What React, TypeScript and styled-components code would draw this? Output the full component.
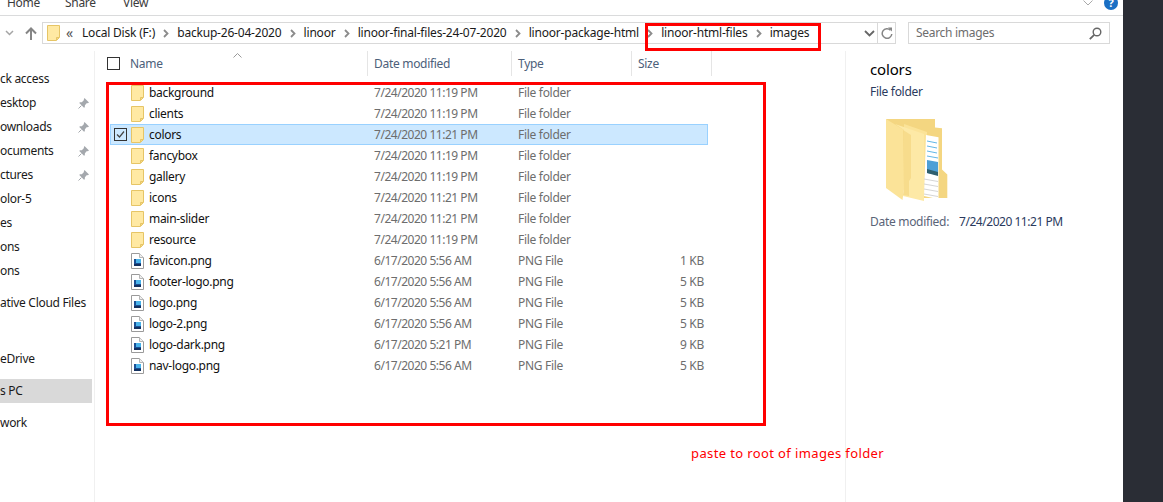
import styled, { createGlobalStyle } from "styled-components";

const GlobalStyle = createGlobalStyle`
  html, body {
    margin: 0;
    padding: 0;
    height: 100%;
    overflow: hidden;
    background: #fff;
  }
  #root {
    height: 100%;
  }
`;

type Entry = { name: string; date: string; type: string; size?: string; selected?: boolean };

const folders = [
  ["background", "7/24/2020 11:19 PM"],
  ["clients", "7/24/2020 11:19 PM"],
  ["colors", "7/24/2020 11:21 PM"],
  ["fancybox", "7/24/2020 11:19 PM"],
  ["gallery", "7/24/2020 11:19 PM"],
  ["icons", "7/24/2020 11:21 PM"],
  ["main-slider", "7/24/2020 11:21 PM"],
  ["resource", "7/24/2020 11:19 PM"],
];

const files = [
  ["favicon.png", "6/17/2020 5:56 AM", "1 KB"],
  ["footer-logo.png", "6/17/2020 5:56 AM", "5 KB"],
  ["logo.png", "6/17/2020 5:56 AM", "5 KB"],
  ["logo-2.png", "6/17/2020 5:56 AM", "5 KB"],
  ["logo-dark.png", "6/17/2020 5:21 PM", "9 KB"],
  ["nav-logo.png", "6/17/2020 5:56 AM", "5 KB"],
];

const entries: Entry[] = [
  ...folders.map(([name, date]) => ({
    name,
    date,
    type: "File folder",
    selected: name === "colors",
  })),
  ...files.map(([name, date, size]) => ({ name, date, size, type: "PNG File" })),
];

const crumbs = [
  "Local Disk (F:)",
  "backup-26-04-2020",
  "linoor",
  "linoor-final-files-24-07-2020",
  "linoor-package-html",
  "linoor-html-files",
  "images",
];

const navItems = [
  { label: "ck access", top: 0 },
  { label: "esktop", top: 0, pinned: true },
  { label: "ownloads", top: 0, pinned: true },
  { label: "ocuments", top: 0, pinned: true },
  { label: "ctures", top: 0, pinned: true },
  { label: "olor-5", top: 0 },
  { label: "es", top: 0 },
  { label: "ons", top: 0 },
  { label: "ons", top: 0 },
  { label: "ative Cloud Files", top: 8 },
  { label: "eDrive", top: 32 },
  { label: "s PC", top: 8, active: true },
  { label: "work", top: 8 },
];

const FolderIcon = () => (
  <svg width="13" height="16" viewBox="0 0 13 16">
    <path d="M.5.5h12v12l-3 3H.5z" fill="#ffe9a3" stroke="#e6c566" />
    <path d="M9.500 15v-2.500H12" fill="#f5d67f" stroke="#e6c566" />
  </svg>
);

const ImageFileIcon = () => (
  <svg width="13" height="16" viewBox="0 0 13 16">
    <path d="M.5.5h8l4 4v11H.5z" fill="#fff" stroke="#9a9a9a" />
    <path d="M8.500.5v4h4" fill="#eee" stroke="#b5b5b5" />
    <rect x="3" y="6" width="7" height="7" fill="#1b4f93" />
    <rect x="5" y="6" width="5" height="4" fill="#49b3ea" />
    <rect x="3" y="11" width="7" height="2" fill="#12305f" />
  </svg>
);

const PinIcon = () => (
  <svg width="11" height="11" viewBox="0 0 11 11">
    <path d="M6.500 0 11 4.500 9.800 5.200 8.900 5 6.900 7.300 6.800 9.200 6 9.800 1.300 5 1.900 4.300 3.800 4.200 6 2.100 5.800 1.200z" fill="#a4a8ad" />
    <path d="M3.400 7.600 .5 10.500" stroke="#a4a8ad" fill="none" />
  </svg>
);

const Chevron = () => (
  <svg width="6" height="9" viewBox="0 0 6 9">
    <path d="M1 1l3.500 3.500L1 8" fill="none" stroke="#8b8b8b" strokeWidth="1.800" />
  </svg>
);

const LargeFolder = () => (
  <svg width="64" height="84" viewBox="0 0 64 84">
    <path d="M0 0h49v8.500l7 .7v41.300l5.300 5v23.500H30z" fill="#f4d681" />
    <path d="M18 5 41 13v60l-23-5z" fill="#fbe398" />
    <path d="M40 16l12.500 2.300v62L38 77z" fill="#fff" />
    <g stroke="#63b7e6">
      <path d="M41 22l10 2" />
      <path d="M41 27l10 2" />
      <path d="M41 32l10 2" />
      <path d="M41 37l11 2" />
    </g>
    <path d="M41 41l11 2v13l-11-2z" fill="#4d9fd6" />
    <path d="M41 50l11 3v4l-11-3z" fill="#2f5f6d" />
    <g stroke="#d5d5d5">
      <path d="M38 60l14 2.500" />
      <path d="M38 65l14 2.500" />
      <path d="M38 70l14 2.500" />
      <path d="M38 75l14 2.500" />
    </g>
    <path d="M0 0l18 11v59l-1.500 11L0 69z" fill="#fbe398" />
    <path d="M9 5l29 10v67L17 77l1-7V11z" fill="#fde9a6" />
    <path d="M17 11l8 5v43l-2 3v15l-6-1 1-6z" fill="#f3d681" opacity=".7" />
  </svg>
);

export default function App() {
  return (
    <Page>
      <GlobalStyle />
      <ExplorerWindow>
        <Ribbon>
          <RibbonTab>Home</RibbonTab>
          <RibbonTab>Share</RibbonTab>
          <RibbonTab>View</RibbonTab>
          <RibbonRight>
            <svg width="10" height="6" viewBox="0 0 10 6">
              <path d="M.5.5l4.500 4.500L9.500.5" fill="none" stroke="#a9a9a9" />
            </svg>
            <HelpBadge>?</HelpBadge>
          </RibbonRight>
        </Ribbon>

        <AddressRow>
          <NavButtons>
            <svg width="9" height="6" viewBox="0 0 9 6">
              <path d="M1 1l3.500 3.500L8 1" fill="none" stroke="#a5a5a5" strokeWidth="1.500" />
            </svg>
            <svg width="12" height="13" viewBox="0 0 12 13">
              <path d="M6 13V2M1 6.500 6 1.500l5 5" fill="none" stroke="#858585" strokeWidth="2" />
            </svg>
          </NavButtons>
          <AddressBox>
            <AddressFolder>
              <FolderIcon />
            </AddressFolder>
            <Overflow>«</Overflow>
            {crumbs.map((crumb, i) => (
              <Crumb key={crumb}>
                {i > 0 && <Chevron />}
                <CrumbLabel>{crumb}</CrumbLabel>
              </Crumb>
            ))}
            <AddressTools>
              <svg width="11" height="7" viewBox="0 0 11 7">
                <path d="M1 1l4.500 4.500L10 1" fill="none" stroke="#666" strokeWidth="1.800" />
              </svg>
              <RefreshButton>
                <svg width="12" height="13" viewBox="0 0 12 13">
                  <path d="M9.500 3.200A4.800 4.800 0 1 0 10.800 7" fill="none" stroke="#858585" strokeWidth="1.500" />
                  <path d="M7 .5h4v4z" fill="#858585" />
                </svg>
              </RefreshButton>
            </AddressTools>
          </AddressBox>
          <SearchBox>
            <SearchLabel>Search images</SearchLabel>
            <svg width="13" height="13" viewBox="0 0 13 13">
              <circle cx="8" cy="5" r="3.800" fill="none" stroke="#666" strokeWidth="1.400" />
              <path d="M5.200 7.800.8 12.200" stroke="#666" strokeWidth="1.800" />
            </svg>
          </SearchBox>
        </AddressRow>

        <Body>
          <Sidebar>
            {navItems.map((item, i) => (
              <NavItem key={i} $top={item.top} $active={item.active}>
                <NavLabel>{item.label}</NavLabel>
                {item.pinned && <PinIcon />}
              </NavItem>
            ))}
          </Sidebar>

          <ListPane>
            <SortCaret>
              <svg width="9" height="5" viewBox="0 0 9 5">
                <path d="M.5 4.500l4-4 4 4" fill="none" stroke="#9a9a9a" />
              </svg>
            </SortCaret>
            <ColumnHeader>
              <HeaderCheck />
              <HeaderCell $width={244} $plain>Name</HeaderCell>
              <HeaderCell $width={144}>Date modified</HeaderCell>
              <HeaderCell $width={120}>Type</HeaderCell>
              <HeaderCell $width={80}>Size</HeaderCell>
              <HeaderEnd />
            </ColumnHeader>
            <Rows>
              {entries.map((entry) => (
                <Row key={entry.name} $selected={entry.selected}>
                  <NameCell>
                    <CheckSlot>
                      {entry.selected && (
                        <svg width="13" height="13" viewBox="0 0 13 13">
                          <rect x=".5" y=".5" width="12" height="12" fill="none" stroke="#333" />
                          <path d="M3 6.500l2.500 2.500 4.500-5.500" fill="none" stroke="#444" strokeWidth="1.200" />
                        </svg>
                      )}
                    </CheckSlot>
                    {entry.size ? <ImageFileIcon /> : <FolderIcon />}
                    <EntryName>{entry.name}</EntryName>
                  </NameCell>
                  <DateCell>{entry.date}</DateCell>
                  <MetaCell>{entry.type}</MetaCell>
                  <SizeCell>{entry.size}</SizeCell>
                </Row>
              ))}
            </Rows>
          </ListPane>

          <DetailsPane>
            <DetailsTitle>colors</DetailsTitle>
            <DetailsType>File folder</DetailsType>
            <DetailsArt>
              <LargeFolder />
            </DetailsArt>
            <DetailsMeta>
              <span>Date modified:</span>
              <DetailsValue>7/24/2020 11:21 PM</DetailsValue>
            </DetailsMeta>
          </DetailsPane>
        </Body>

        <PathHighlight />
        <ListHighlight />
        <Annotation>paste to root of images folder</Annotation>
      </ExplorerWindow>
      <DarkEdge />
    </Page>
  );
}

// Styled Components

const Page = styled.div`
  display: flex;
  height: 502px;
  width: 1163px;
  overflow: hidden;
  font-family: "Noto Sans", "Open Sans", sans-serif;
  font-size: 12px;
  letter-spacing: -0.3px;
  color: #000;
`;

const ExplorerWindow = styled.div`
  position: relative;
  flex: 0 0 1122px;
  display: flex;
  flex-direction: column;
  background: #fff;
`;

const DarkEdge = styled.div`
  flex: 1;
  background: #2a2d35;
`;

const Ribbon = styled.div`
  flex: 0 0 16px;
  box-sizing: border-box;
  display: flex;
  align-items: flex-end;
  padding: 0 0 4px 7px;
  gap: 30px;
  border-bottom: 1px solid #dadbdc;
  overflow: hidden;
`;

const RibbonTab = styled.div`
  width: 28px;
  line-height: 16px;
  color: #3b3b3b;
`;

const RibbonRight = styled.div`
  align-self: flex-start;
  margin-left: auto;
  margin-right: 5px;
  display: flex;
  align-items: flex-start;
  gap: 11px;
`;

const HelpBadge = styled.div`
  width: 14px;
  height: 14px;
  margin-top: -4px;
  border-radius: 50%;
  background: #1a6fc4;
  color: #fff;
  font-size: 11px;
  font-weight: 700;
  line-height: 14px;
  text-align: center;
`;

const AddressRow = styled.div`
  flex: 0 0 35px;
  box-sizing: border-box;
  display: flex;
  align-items: flex-start;
  padding: 6px 13px 0 0;
`;

const NavButtons = styled.div`
  flex: 0 0 42px;
  height: 22px;
  display: flex;
  align-items: center;
  gap: 11px;
  padding-left: 5px;
  box-sizing: border-box;
`;

const AddressBox = styled.div`
  flex: 0 0 854px;
  box-sizing: border-box;
  height: 22px;
  display: flex;
  align-items: center;
  border: 1px solid #d9d9d9;
  padding-left: 4px;
  white-space: nowrap;
`;

const AddressFolder = styled.div`
  display: flex;
  margin-right: 6px;
`;

const Overflow = styled.span`
  color: #555;
  width: 16px;
  font-size: 14px;
  margin-bottom: 2px;
`;

const Crumb = styled.div`
  display: flex;
  align-items: center;
  gap: 8px;
  margin-right: 8.2px;
  color: #1a1a1a;
  letter-spacing: -0.2px;
`;

const CrumbLabel = styled.span`
  margin-bottom: 1px;
`;

const AddressTools = styled.div`
  margin-left: auto;
  display: flex;
  align-items: center;
  height: 100%;
  gap: 2px;
`;

const RefreshButton = styled.div`
  width: 17px;
  height: 100%;
  display: flex;
  align-items: center;
  justify-content: center;
  border-left: 1px solid #d9d9d9;
`;

const SearchBox = styled.div`
  margin-left: 12px;
  flex: 0 0 202px;
  box-sizing: border-box;
  height: 22px;
  display: flex;
  align-items: center;
  justify-content: space-between;
  padding: 0 7px;
  border: 1px solid #d9d9d9;
  color: #6d6d6d;
`;

const SearchLabel = styled.span`
  margin-bottom: 1px;
`;

const Body = styled.div`
  flex: 1;
  display: flex;
  min-height: 0;
`;

const Sidebar = styled.nav`
  flex: 0 0 95px;
  box-sizing: border-box;
  padding-top: 16px;
  padding-right: 2px;
  border-right: 1px solid #f0f0f0;
  overflow: hidden;
`;

const NavItem = styled.div<{ $top: number; $active?: boolean }>`
  height: 24px;
  margin-top: ${(p) => p.$top}px;
  display: flex;
  align-items: center;
  justify-content: space-between;
  padding-right: 3px;
  white-space: nowrap;
  color: #1a1a1a;
  background: ${(p) => (p.$active ? "#d9d9d9" : "transparent")};
`;

const NavLabel = styled.span`
  margin-bottom: 1px;
`;

const ListPane = styled.div`
  position: relative;
  flex: 0 0 750px;
  box-sizing: border-box;
  padding-left: 12px;
`;

const SortCaret = styled.div`
  position: absolute;
  left: 138px;
  top: 0;
  line-height: 5px;
`;

const ColumnHeader = styled.div`
  height: 25px;
  display: flex;
  align-items: center;
  margin-bottom: 6px;
  color: #4c607a;
`;

const HeaderCheck = styled.div`
  flex: 0 0 auto;
  box-sizing: border-box;
  width: 13px;
  height: 13px;
  margin-right: 3px;
  border: 1px solid #333;
`;

const HeaderCell = styled.div<{ $width: number; $plain?: boolean }>`
  box-sizing: border-box;
  flex: 0 0 ${(p) => p.$width}px;
  height: 25px;
  line-height: 25px;
  padding-left: 6px;
  border-left: 1px solid ${(p) => (p.$plain ? "transparent" : "#e5e5e5")};
`;

const HeaderEnd = styled.div`
  width: 1px;
  height: 25px;
  background: #e5e5e5;
`;

const Rows = styled.div`
  margin-left: 3px;
  width: 598px;
`;

const Row = styled.div<{ $selected?: boolean }>`
  box-sizing: border-box;
  height: 21px;
  display: grid;
  grid-template-columns: 263px 144px 120px 1fr;
  align-items: center;
  border: 1px solid ${(p) => (p.$selected ? "#99d1ff" : "transparent")};
  background: ${(p) => (p.$selected ? "#cce8ff" : "transparent")};
`;

const NameCell = styled.div`
  display: flex;
  align-items: center;
  white-space: nowrap;
`;

const CheckSlot = styled.div`
  flex: 0 0 20px;
  height: 13px;
  padding-left: 3px;
  box-sizing: border-box;
  display: flex;
`;

const EntryName = styled.span`
  margin-left: 5px;
  color: #111;
`;

const MetaCell = styled.div`
  color: #6d6d6d;
  white-space: nowrap;
`;

const DateCell = styled(MetaCell)`
  letter-spacing: -0.47px;
`;

const SizeCell = styled(MetaCell)`
  text-align: right;
  padding-right: 3px;
`;

const DetailsPane = styled.aside`
  flex: 1;
  box-sizing: border-box;
  padding: 8px 0 0 24px;
  border-left: 1px solid #f0f0f0;
`;

const DetailsTitle = styled.div`
  font-size: 15px;
  line-height: 20px;
  letter-spacing: -0.15px;
  color: #000;
`;

const DetailsType = styled.div`
  margin-top: 4px;
  line-height: 17px;
  color: #2b3a5e;
`;

const DetailsArt = styled.div`
  display: flex;
  margin: 19px 0 0 16px;
  height: 86px;
`;

const DetailsMeta = styled.div`
  margin-top: 8px;
  display: flex;
  white-space: nowrap;
  color: #5a6478;
`;

const DetailsValue = styled.span`
  margin-left: 10px;
  letter-spacing: -0.47px;
  color: #2b3a5e;
`;

const PathHighlight = styled.div`
  position: absolute;
  left: 645px;
  top: 23px;
  width: 176px;
  height: 28px;
  box-sizing: border-box;
  border: 3px solid #ff0000;
  pointer-events: none;
`;

const ListHighlight = styled.div`
  position: absolute;
  left: 106px;
  top: 82px;
  width: 660px;
  height: 344px;
  box-sizing: border-box;
  border: 3px solid #ff0000;
  pointer-events: none;
`;

const Annotation = styled.div`
  position: absolute;
  left: 691px;
  top: 444px;
  font-size: 13px;
  line-height: 18px;
  letter-spacing: 0.38px;
  color: #ff0000;
  white-space: nowrap;
`;
